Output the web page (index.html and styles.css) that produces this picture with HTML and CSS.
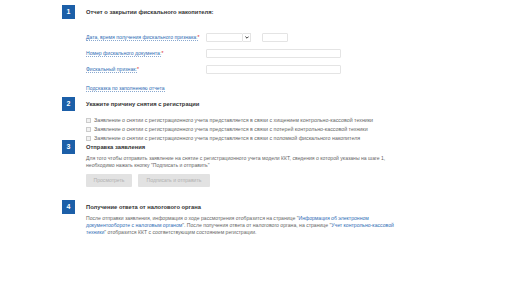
FILE: index.html
```html
<!DOCTYPE html>
<html lang="ru">
  <head>
    <meta charset="utf-8">
    <title>Снятие ККТ с регистрации</title>
    <link rel="stylesheet" href="styles.css">
  </head>
  <body>
    <div class="page">

      <!-- Step 1 -->
      <div class="step step-1">
        <div class="badge">1</div>
        <div class="step-body">
          <h2 class="step-title">Отчет о закрытии фискального накопителя:</h2>
          <div class="form">
            <div class="form-row">
              <span class="label"><span class="link">Дата, время получения фискального признака:</span><span class="req">*</span></span>
              <span class="date-input"></span><span class="date-btn"><svg width="4" height="3" viewBox="0 0 4 3"><path d="M0.4 0.6 L2 2.2 L3.6 0.6" fill="none" stroke="#222" stroke-width="0.9"/></svg></span>
              <span class="time-input"></span>
            </div>
            <div class="form-row">
              <span class="label"><span class="link">Номер фискального документа:</span><span class="req">*</span></span>
              <span class="text-input"></span>
            </div>
            <div class="form-row">
              <span class="label"><span class="link">Фискальный признак:</span><span class="req">*</span></span>
              <span class="text-input"></span>
            </div>
          </div>
          <a class="link hint">Подсказка по заполнению отчета</a>
        </div>
      </div>

      <!-- Step 2 -->
      <div class="step step-2">
        <div class="badge">2</div>
        <div class="step-body">
          <h2 class="step-title">Укажите причину снятия с регистрации</h2>
          <div class="checks">
            <label class="check"><span class="box"></span>Заявление о снятии с регистрационного учета представляется в связи с хищением контрольно-кассовой техники</label>
            <label class="check"><span class="box"></span>Заявление о снятии с регистрационного учета представляется в связи с потерей контрольно-кассовой техники</label>
            <label class="check"><span class="box"></span>Заявление о снятии с регистрационного учета представляется в связи с поломкой фискального накопителя</label>
          </div>
        </div>
      </div>

      <!-- Step 3 -->
      <div class="step step-3">
        <div class="badge">3</div>
        <div class="step-body">
          <h2 class="step-title">Отправка заявления</h2>
          <p class="text text-send">Для того чтобы отправить заявление на снятие с регистрационного учета модели ККТ, сведения о которой указаны на шаге 1, необходимо нажать кнопку "Подписать и отправить"</p>
          <div class="buttons">
            <span class="btn btn-view">Просмотреть</span>
            <span class="btn btn-send">Подписать и отправить</span>
          </div>
        </div>
      </div>

      <!-- Step 4 -->
      <div class="step step-4">
        <div class="badge">4</div>
        <div class="step-body">
          <h2 class="step-title">Получение ответа от налогового органа</h2>
          <p class="text text-answer">После отправки заявления, информация о ходе рассмотрения отобразится на странице "<a class="blue">Информация об электронном документообороте с налоговым органом</a>". После получения ответа от налогового органа, на странице "<a class="blue">Учет контрольно-кассовой техники</a>" отобразится ККТ с соответствующим состоянием регистрации.</p>
        </div>
      </div>

    </div>
  </body>
</html>
```

FILE: styles.css
```css
body {
  margin: 0;
  background-color: #fff;
  font-family: 'Liberation Sans', Arial, sans-serif;
  color: #555;
}

.page {
  padding: 5px 0 0 62px;
}

.step {
  display: flex;
  gap: 11px;
}

.step-2 {
  margin-top: 5px;
}

.step-3 {
  margin-top: -3px;
}

.step-4 {
  margin-top: 13px;
}

.badge {
  flex: none;
  width: 13px;
  height: 14px;
  background-color: #1c5fa8;
  color: #fff;
  font-size: 7px;
  font-weight: bold;
  line-height: 14px;
  text-align: center;
}

.step-body {
  width: 340px;
  font-size: 5px;
  line-height: 7px;
}

.step-title {
  margin: 0;
  font-size: 5.8px;
  line-height: 14px;
  font-weight: bold;
  color: #333;
}

.form {
  margin-top: 14px;
}

.form-row {
  display: flex;
  align-items: center;
  height: 9px;
  margin-bottom: 7px;
  font-size: 5.1px;
}

.label {
  width: 120px;
  flex: none;
}

.link {
  color: #2f6db5;
  border-bottom: 1px dotted #8aa9d0;
  line-height: 6px;
}

.req {
  color: #d22;
}

.date-input,
.time-input,
.text-input {
  box-sizing: border-box;
  height: 9px;
  border: 1px solid #e4e4e4;
  border-radius: 1px;
}

.date-input {
  width: 37px;
}

.date-btn {
  box-sizing: border-box;
  width: 8px;
  height: 9px;
  border: 1px solid #e4e4e4;
  border-left: none;
  display: flex;
  align-items: center;
  justify-content: center;
}

.time-input {
  width: 26px;
  margin-left: 11px;
}

.text-input {
  width: 135px;
}

.hint {
  display: block;
  width: max-content;
  margin-top: 11px;
  font-size: 5.1px;
}

.checks {
  margin-top: 5px;
}

.check {
  display: flex;
  align-items: center;
  height: 9px;
  font-size: 5.3px;
  color: #666;
  white-space: nowrap;
}

.box {
  box-sizing: border-box;
  flex: none;
  width: 5px;
  height: 5px;
  margin-right: 3px;
  border: 1px solid #ccc;
  background-color: #f2f2f2;
}

.text {
  margin: 1px 0 0;
  font-size: 5.1px;
  line-height: 7px;
  color: #666;
}

.text-send {
  width: 312px;
}

.text-answer {
  width: 328px;
}

.blue {
  color: #2f6db5;
}

.buttons {
  display: flex;
  gap: 6px;
  margin-top: 5px;
}

.btn {
  height: 13px;
  padding: 0 7px;
  background-color: #e2e2e2;
  border-radius: 1px;
  color: #b0b0b0;
  font-size: 5.1px;
  line-height: 13px;
}

.btn-view {
  width: 32px;
  text-align: center;
}

.btn-send {
  width: 58px;
  text-align: center;
}
```
